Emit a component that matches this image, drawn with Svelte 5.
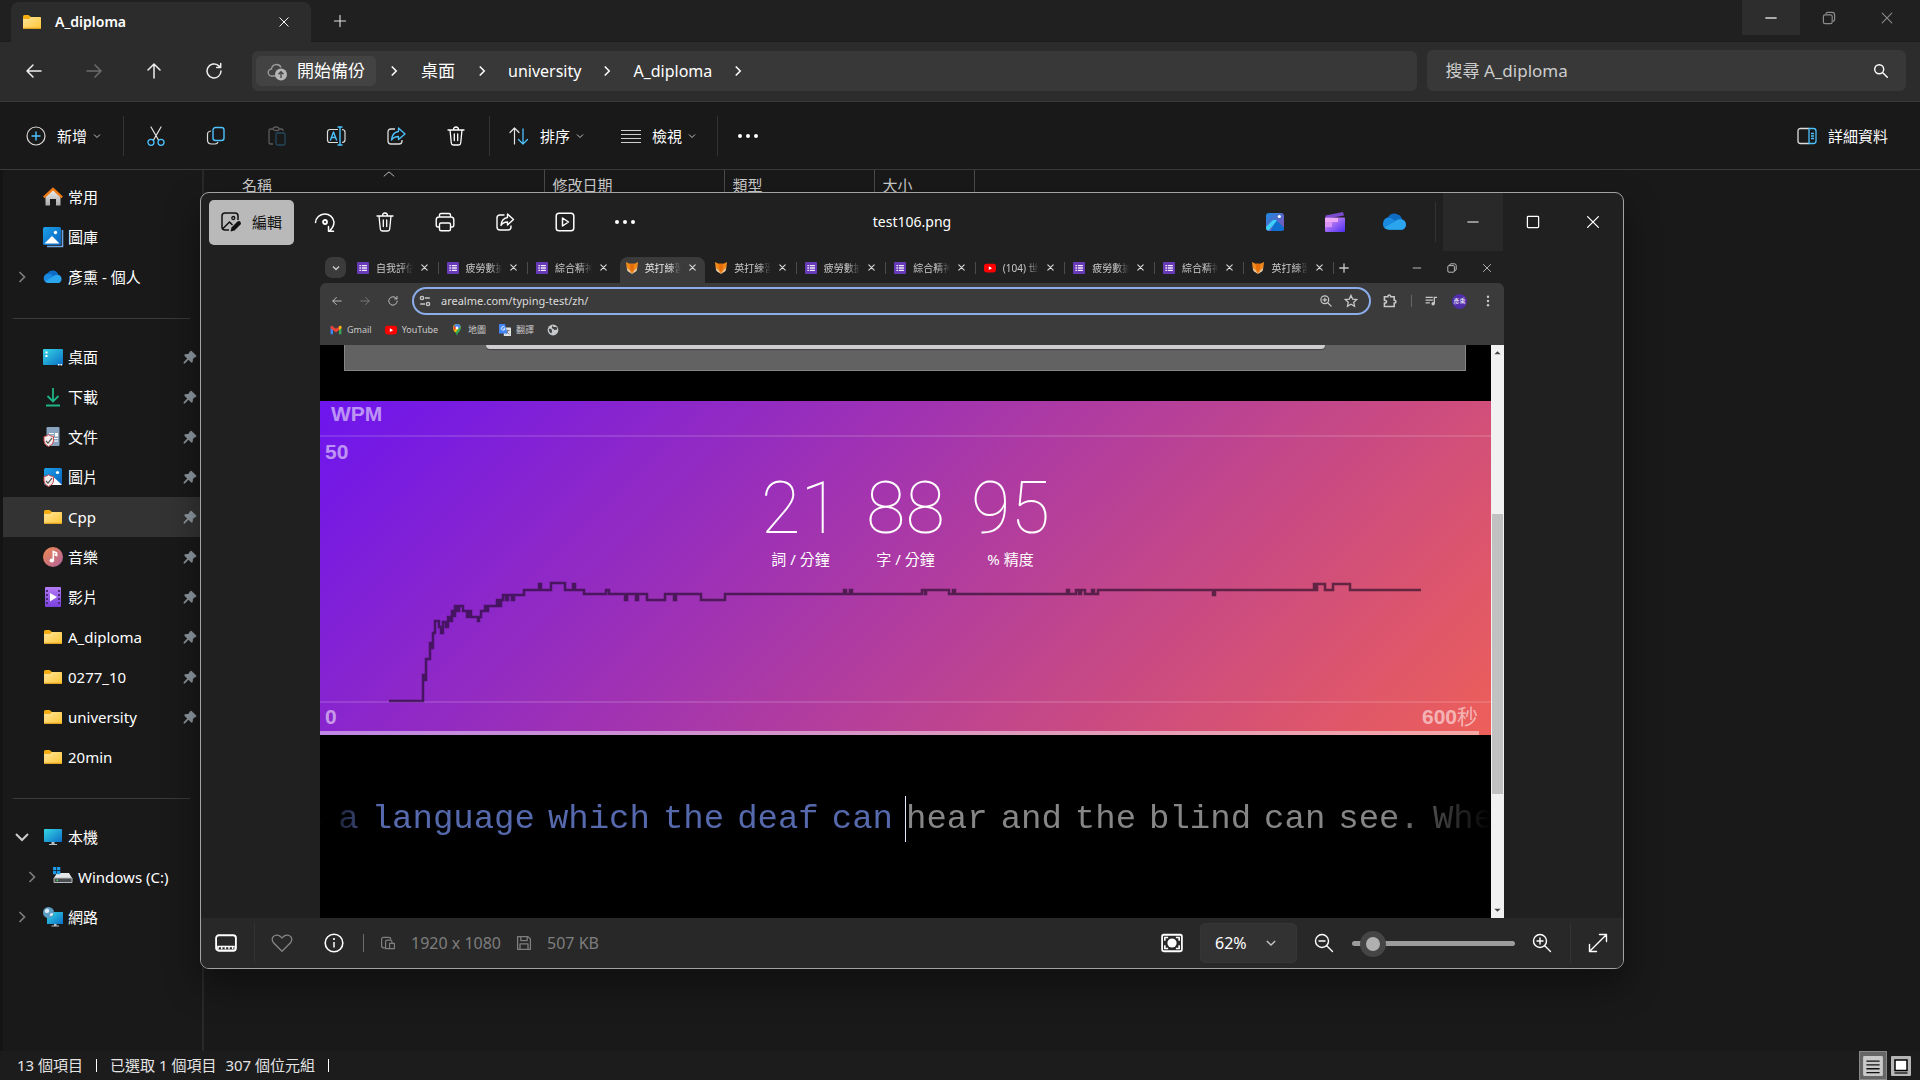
<script>
  const chevR = '<path d="M7.500 5l5 5-5 5" fill="none" stroke="currentColor" stroke-width="1.700"/>';
  const chevD = '<path d="M4 7l6 6 6-6" fill="none" stroke="currentColor" stroke-width="2"/>';
  const blue = '#4cc2ff';
  const line = (d, w = 1.3, c = 'currentColor') =>
    `<path d="${d}" fill="none" stroke="${c}" stroke-width="${w}" stroke-linecap="round" stroke-linejoin="round"/>`;
  const shield = '<path d="M1 9.500q3-.3 4.500-1.800Q7 9.200 10.500 9.500V14q0 3.500-5 5.500Q1 17.500 1 14z" fill="#f3eded" stroke="#c8474a"/><path d="M3 14l2 2.200 4-5" fill="none" stroke="#555" stroke-width="1.200"/>';

  const icons = {
    chevR,
    chevD,
    chevBold: '<path d="M4 7l6 6 6-6" fill="none" stroke="currentColor" stroke-width="3"/>',
    folder: '<path d="M1 4.500Q1 3 2.500 3h4L9 5h8.500Q19 5 19 6.500V8H1z" fill="#f5ad12"/><path d="M1 7h6l2-2h9q1 0 1 1v10.500q0 .5-.5.500h-17q-.5 0-.5-.5z" fill="url(#gFolder)"/><path d="M1 16.300h18" stroke="#d9981a" stroke-width="1"/>',
    close: line('M4 4l12 12M16 4L4 16', 1.4),
    closeBold: line('M4 4l12 12M16 4L4 16', 2.4),
    plus: line('M10 3v14M3 10h14', 1.4),
    plusBold: line('M10 3v14M3 10h14', 2.2),
    min: '<path d="M3 10h14" stroke="currentColor" stroke-width="1.500"/>',
    max: '<rect x="3" y="3" width="14" height="14" rx="1" fill="none" stroke="currentColor" stroke-width="1.600"/>',
    restore: '<rect x="3" y="6" width="11" height="11" rx="2" fill="none" stroke="currentColor" stroke-width="1.500"/><path d="M6 5q.5-2 2.500-2H14q3 0 3 3v6q0 2-2 2.300" fill="none" stroke="currentColor" stroke-width="1.500"/>',
    back: line('M17 10H3M9 4l-6 6 6 6', 1.5),
    fwd: line('M3 10h14M11 4l6 6-6 6', 1.5),
    up: line('M10 17V3M4 9l6-6 6 6', 1.5),
    reload: line('M17 10a7 7 0 1 1-2.500-5.400L16.500 6.500M16.700 2.500v4h-4', 1.5),
    cloudUp: '<path d="M9 15H5a3.500 3.500 0 0 1-.5-7A5 5 0 0 1 14 6.500" fill="none" stroke="#9c9c9c" stroke-width="1.400"/><circle cx="14" cy="13.500" r="6" fill="#b5b5b5"/><path d="M14 17v-6M11.500 13.200L14 10.700l2.500 2.500" fill="none" stroke="#444" stroke-width="1.300"/>',
    search: line('M12 12l5 5M13 8a5 5 0 1 1-10 0 5 5 0 0 1 10 0z', 1.6),
    add: '<circle cx="10" cy="10" r="9" fill="none" stroke="#d6d6d6" stroke-width="1.200"/>' + line('M10 6v8M6 10h8', 1.4, blue),
    cut: line('M5 1l7.500 13M15 1L7.500 14', 1.2, '#e4e4e4') + `<circle cx="5" cy="16.300" r="3" fill="none" stroke="${blue}" stroke-width="1.300"/><circle cx="15" cy="16.300" r="3" fill="none" stroke="${blue}" stroke-width="1.300"/>`,
    copy: `<path d="M5 5q-3.500.5-3.500 3v6q0 4 4 4h3.500q2.500 0 3-2" fill="none" stroke="#ddd" stroke-width="1.200"/><rect x="7" y="1.500" width="11" height="13" rx="2.500" fill="none" stroke="${blue}" stroke-width="1.400"/>`,
    paste: '<path d="M7 18H4.500Q3 18 3 16.500v-12Q3 3 4.500 3H7m6 0h2.500Q17 3 17 4.500V5M7 3q0-2 3-2t3 2-3 1.500S7 4 7 3z" fill="none" stroke="#5b5b5b" stroke-width="1.300"/><rect x="10" y="7" width="9" height="12" rx="1.500" fill="none" stroke="#24495c" stroke-width="1.300"/>',
    rename: '<path d="M12 3.500H4Q1.500 3.500 1.500 6v8q0 2.500 2.500 2.500h8M16 3.500q3 .2 3 2.500v8q0 2.300-3 2.500" fill="none" stroke="#ddd" stroke-width="1.200"/>' + line('M12 1h4M12 19h4M14 1v18M4.500 14l3-8 3 8M5.500 11.500h4', 1.4, blue),
    shareBlue: '<path d="M9 3H5Q2 3 2 6v9q0 3 3 3h8q3 0 3-3v-1" fill="none" stroke="#ddd" stroke-width="1.300"/>' + line('M12.500 2l6.500 6-6.500 5.500V10.500Q8 10.500 5.500 14 6 6.500 12.500 5.500z', 1.3, blue),
    share: line('M9 3H5Q2 3 2 6v9q0 3 3 3h8q3 0 3-3v-1M12.500 2l6 5.500-6 5.500V10Q8 10 6 13.500 6.500 6.500 12.500 5.500z', 1.4),
    trash: line('M2 4h16M4 4l1.300 13q.2 2 2 2h5.400q1.800 0 2-2L16 4M7.500 4q0-3 2.500-3t2.500 3M8.300 8v6.500M11.700 8v6.500', 1.3),
    sort: line('M5.500 18V2M1 6.500L5.500 2 10 6.500', 1.2, '#e4e4e4') + line('M14 3v15M9.500 13.500L14 18l4.500-4.500', 1.3, blue),
    view: '<path d="M0 4.500h20M0 8.500h20M0 12.500h20M0 16.500h20" stroke="#d0d0d0" stroke-width="1.200"/>',
    dots: '<g fill="currentColor"><circle cx="2" cy="10" r="2"/><circle cx="10" cy="10" r="2"/><circle cx="18" cy="10" r="2"/></g>',
    details: `<path d="M12 2.500H3.500Q1 2.500 1 5v10q0 2.500 2.500 2.500H12" fill="none" stroke="#ddd" stroke-width="1.300"/><path d="M12 2.500h4.500Q19 2.500 19 5v10q0 2.500-2.500 2.500H12zM14 7.500h3M14 10h3M14 12.500h3" fill="none" stroke="${blue}" stroke-width="1.300"/>`,
    home: '<path d="M2.500 9L10 2l7.500 7v9.500H13V12H7v6.500H2.500z" fill="url(#gHome)"/><path d="M.8 10.300L10 1.800l9.200 8.500" fill="none" stroke="#ef7a12" stroke-width="2.300"/>',
    gallery: '<path d="M4 19.500h15.500V3" fill="none" stroke="#6fa4e3" stroke-width="1.600"/><rect x="0" y="0" width="18" height="18" rx="1.500" fill="url(#gPic)"/><path d="M1.500 16.500L9 9l7.500 7.500z" fill="#fff"/><circle cx="12.500" cy="5.500" r="1.700" fill="#fff"/>',
    cloud: '<path d="M5.500 16A5 5 0 0 1 4.500 6.500a6 6 0 0 1 11 1.500A4.200 4.200 0 0 1 15.500 16z" fill="#0f6cc4"/><path d="M4.500 6.500q3 0 5.500 2.300L3 15.500a5 5 0 0 1 1.500-9z" fill="#1a8ae0"/><path d="M2 14.500L10.500 9q2-1.500 5-1A4.200 4.200 0 0 1 15.500 16h-10Q3.500 16 2 14.500z" fill="#2ba6ee"/>',
    desktop: '<rect x="0" y="2" width="20" height="16" rx="1" fill="url(#gDesk)"/><path d="M2.500 4.500h2v2h-2zM2.500 8h2v2h-2zM15 17h1.500v1.500H15zM17.500 17H19v1.500h-1.500z" fill="#fff"/>',
    download: '<path d="M10 1v13M4.500 9l5.500 5.500L15.500 9M3 18.500h14" fill="none" stroke="#1fb487" stroke-width="1.800"/>',
    doc: '<rect x="3.500" y="0" width="13" height="19" rx="1" fill="#8aa4c0"/><path d="M6 6.500h5M6 9h5M6 11.500h9M6 14h9" stroke="#fff"/><path d="M12 6h3v3.500h-3z" fill="#fff"/>' + shield,
    pictures: '<rect x="1" y="1" width="18" height="17" rx="1.500" fill="url(#gPic)"/><path d="M4 18l7-7.500 8 7.500z" fill="#fff"/><circle cx="14.500" cy="5.500" r="1.600" fill="#fff"/>' + shield,
    music: '<circle cx="10" cy="10" r="10" fill="url(#gMusic)"/><ellipse cx="8.800" cy="13.500" rx="2.300" ry="2" fill="#fff"/><path d="M10.300 13.500V4.500l3.300 1.500v2.500l-2-1" fill="none" stroke="#fff" stroke-width="1.600"/>',
    video: '<rect x="2" y="0" width="16" height="20" rx="1" fill="url(#gVideo)"/><path d="M4 3v15M16 3v15" stroke="#4a2a7a" stroke-width="2" stroke-dasharray="2 2"/><path d="M7 6l7 4-7 4.500z" fill="#fff"/>',
    pc: '<rect x="1" y="2" width="18" height="13" rx=".8" fill="url(#gDesk)"/><path d="M8.500 15h3v2H14v1H6v-1h2.500z" fill="#b9c3ca"/>',
    drive: '<path d="M4 6h12l3 5H1z" fill="#e5e7e9"/><path d="M1 11h18v4.500H1z" fill="#4a4d50" stroke="#b6b9bb" stroke-width="1"/><path d="M3.500 12.500h1.500v1.500H3.500z" fill="#3bdc5c"/><path d="M0 0h3.300v3.300H0zM4 0h3.300v3.300H4zM0 4h3.300v3.300H0zM4 4h3.300v3.300H4z" fill="#1c9bea"/>',
    network: '<rect x="4" y="5" width="16" height="12" fill="url(#gDesk)"/><path d="M11 17h2.500v1.500H16v1H8.500v-1H11z" fill="#b9c3ca"/><circle cx="5.500" cy="5.500" r="5.500" fill="#5d9dc4"/><path d="M2 3q3-3 4 0t-2 3-2-3zM7 7q3-2 3 0t-3 2z" fill="#dcecf5"/>',
    pin: '<path d="M12 2.500L17.800 8q1 1.300-.5 1.800l-3.500 2.400-.5 4q-.8 1.500-2 .5L8 13.500 3.500 18H2v-1.500L6.500 12 3.300 8.700q-1-1.200.5-2l4-.5 2.400-3.500q.7-1.200 1.800-.2z" fill="#8d969f"/>',
    edit: '<path d="M17 8V4q0-3-3-3H4Q1 1 1 4v11q0 3 3 3h4M2 16.500L8.500 10l3 3" fill="none" stroke="#111" stroke-width="1.500"/><circle cx="12.300" cy="6" r="1.500" fill="none" stroke="#111" stroke-width="1.300"/><path d="M9.500 19.500l1-4L16.500 9.500q2-1 3 .5t0 2.500L13.500 18.500z" fill="#111"/>',
    rotate: line('M.5 10.500A9.300 9.300 0 0 1 19 10q0 5-4.500 9M13.500 14.500v4.800h5', 1.5) + '<circle cx="10" cy="10" r="2" fill="none" stroke="currentColor" stroke-width="1.800"/>',
    print: line('M4.500 5V3q0-1.500 1.500-1.500h8q1.500 0 1.500 1.500v2M4.500 15H3q-1.800 0-1.800-2V8Q1.200 5 4 5h12q2.800 0 2.800 3v5q0 2-1.800 2h-1.500M6 11h8q1.500 0 1.500 1.500v4.500q0 1.800-1.500 1.800H6q-1.500 0-1.500-1.800v-4.500Q4.500 11 6 11z', 1.4),
    play: line('M4 1.200h12q2.800 0 2.800 2.800v12q0 2.800-2.800 2.800H4q-2.800 0-2.800-2.800V4Q1.200 1.200 4 1.200zM7.500 6v8l6-4z', 1.5),
    photos: '<rect x="1" y="1" width="18" height="18" rx="3" fill="url(#gPhotos)"/><path d="M10.500 7.500l8.500 8v1q0 2.500-2.500 2.500H6z" fill="#0f6fd0"/><path d="M1 15l6.500-6.500q2-1.500 4.500 0L3.500 18.800Q1 18 1 16z" fill="#3fd0fa"/><circle cx="14.300" cy="4.500" r="1.600" fill="#fff"/>',
    clip: '<path d="M.5 3.500L18 0l1 3.500L.5 7z" fill="#7b4bd0"/><rect x="0" y="5.500" width="20" height="14.500" rx="1" fill="url(#gClip)"/><path d="M0 6h13v4H0z" fill="#eba7f8"/><path d="M0 10h7v5H0z" fill="#d993f5"/>',
    film: '<rect x="1" y="3" width="18" height="14" rx="2.500" fill="none" stroke="currentColor" stroke-width="1.700"/><path d="M2 12.500h16V16H2z" fill="currentColor"/><path d="M3.500 14.700h14" stroke="#282828" stroke-width="1.800" stroke-dasharray="2 1.300"/>',
    heart: line('M10 17.500L2.500 10Q0 7 2 4.200 5 1.500 8.500 4L10 5.500 11.500 4Q15 1.500 18 4.200 20 7 17.500 10z', 1.2),
    info: '<circle cx="10" cy="10" r="8.800" fill="none" stroke="currentColor" stroke-width="1.600"/><path d="M10 9v5.500" stroke="currentColor" stroke-width="1.500"/><circle cx="10" cy="6" r="1.100" fill="currentColor"/>',
    dims: line('M7 16H4.500Q2 16 2 13.500v-8Q2 3 4.500 3H11q2.500 0 2.500 2M7 17V8.500Q7 6.500 9 6.500h4q2 0 2 2.500M12 10.500h6V17h-6zM7 17h5', 1.5),
    save: line('M2 2h13l3 3v13H2zM6 2v5h8V2M5 18v-7h10v7', 1.6),
    fit: '<rect x="1" y="2.500" width="18" height="15" rx="1.500" fill="none" stroke="currentColor" stroke-width="1.600"/><circle cx="10" cy="10" r="4.200" fill="currentColor"/><path d="M3.500 8V5h3M13.500 5h3v3M16.500 12v3h-3M6.500 15h-3v-3" fill="none" stroke="currentColor" stroke-width="1.500"/>',
    zoomOut: line('M12.500 12.500l6 6M14.500 8a6.500 6.500 0 1 1-13 0 6.500 6.500 0 0 1 13 0zM5 8h6', 1.4),
    zoomIn: line('M12.500 12.500l6 6M14.500 8a6.500 6.500 0 1 1-13 0 6.500 6.500 0 0 1 13 0zM5 8h6M8 5v6', 1.4),
    zoomBold: line('M12.500 12.500l6 6M14.500 8a6.500 6.500 0 1 1-13 0 6.500 6.500 0 0 1 13 0zM5 8h6M8 5v6', 2),
    expand: line('M2 18L18 2M11.500 1.500h7v7M1.500 11.500v7h7', 1.4),
    form: '<rect x="0" y="0" width="20" height="20" rx="1.500" fill="#673ab7"/><path d="M4 6h2.500M4 10h2.500M4 14h2.500M8 6h8.500M8 10h8.500M8 14h8.500" stroke="#f3ecfa" stroke-width="2.300"/>',
    fox: '<path d="M0 0l6 3h8l6-3-1 9-9 10.500L1 9z" fill="#f08a1d"/><path d="M1 9l4.500 4.500L10 19.500l4.500-6L19 9l-1.500 6L10 20l-7.500-5z" fill="#f6d2a8"/><path d="M6 3h8l-1 9-3 5-3-5z" fill="#e66f0b"/>',
    yt: '<rect x="0" y="3" width="20" height="14.500" rx="4" fill="#f00"/><path d="M8 7l5.500 3.300L8 13.500z" fill="#fff"/>',
    tune: '<path d="M10 5h8M2 15h8" stroke="currentColor" stroke-width="2.400"/><circle cx="5" cy="5" r="2.700" fill="none" stroke="currentColor" stroke-width="2.400"/><circle cx="15" cy="15" r="2.700" fill="none" stroke="currentColor" stroke-width="2.400"/>',
    star: '<path d="M10 2l2.400 5.300 5.800.6-4.300 3.900 1.200 5.700L10 14.600l-5.100 2.900 1.200-5.700L1.800 7.900l5.800-.6z" fill="none" stroke="currentColor" stroke-width="1.800"/>',
    puzzle: '<path d="M2 4h5q0-2.500 2-2.500T11 4h5v5q2.500 0 2.500 2T16 13v5H2v-5q3 0 3-2T2 9z" fill="none" stroke="currentColor" stroke-width="2.200"/>',
    playlist: '<path d="M1 4h12M1 8.500h12M1 13h7M15.500 14V4H20" fill="none" stroke="currentColor" stroke-width="2.200"/><circle cx="13.500" cy="14.500" r="2.800" fill="currentColor"/>',
    vdots: '<g fill="currentColor"><circle cx="10" cy="3" r="2"/><circle cx="10" cy="10" r="2"/><circle cx="10" cy="17" r="2"/></g>',
    gmail: '<path d="M1 17V4l4 3v10z" fill="#4285f4"/><path d="M19 17V4l-4 3v10z" fill="#34a853"/><path d="M1 4q2-2 4 0l5 4 5-4q2-2 4 0v3l-9 7-9-7z" fill="#ea4335"/><path d="M15 4q2-2 4 0v3l-4 3z" fill="#fbbc04"/>',
    maps: '<path d="M10 0a6.500 6.500 0 0 1 6.500 6.500C16.500 12 11 13 10 20 9 13 3.500 12 3.500 6.500A6.500 6.500 0 0 1 10 0z" fill="#34a853"/><path d="M10 0a6.500 6.500 0 0 1 6 4L7 14Q3.500 11 3.500 6.500A6.500 6.500 0 0 1 10 0z" fill="#fbbc04"/><path d="M10 0a6.500 6.500 0 0 1 6 4l-5 5-6-6Q7 0 10 0z" fill="#4285f4"/><path d="M5 2.500l4 4-4 4.500Q3 6 5 2.500z" fill="#ea4335"/><circle cx="10" cy="6.500" r="2.200" fill="#fff"/>',
    translate: '<rect x="8" y="6" width="12" height="14" rx="1" fill="#dfe1e4"/><path d="M11 11h7M14.500 9.500V11q0 4-3 6M12.500 12q2 4 5 5" stroke="#666" fill="none" stroke-width="1.200"/><path d="M0 1q0-1 1-1h9l4 16H1q-1 0-1-1z" fill="#4285f4"/><path d="M9.500 5.500A3 3 0 1 0 10 8H7.500" fill="none" stroke="#fff" stroke-width="1.500"/>',
    globe: '<circle cx="10" cy="10" r="9" fill="#c7c9cc"/><path d="M3 8q4-1 5 2t-1 6q-4-2-4-8zM9 2q1 4 5 3t3 4l-5 1q-1-3-4-3z" fill="#3f4042"/>',
    up2: '<path d="M3 14l7-7 7 7z" fill="#444"/>',
    down2: '<path d="M3 6l7 7 7-7z" fill="#444"/>',
    caretUp: line('M3 13l7-6 7 6', 1.3),
    listView: '<rect x="1" y="1" width="18" height="18" rx="1" fill="#c9c9c9"/><path d="M4 5.500h12M4 9h12M4 12.500h12M4 16h12" stroke="#111" stroke-width="1.200"/>',
    thumbView: '<rect x="0" y="0" width="20" height="20" rx="1" fill="#b5b5b5"/><rect x="4" y="4" width="12" height="10.500" fill="#fff" stroke="#000" stroke-width="1.500"/><path d="M3.500 17h13" stroke="#000" stroke-width="1.200"/>'
  };

  const places = [
    { icon: 'home', label: '常用' },
    { icon: 'gallery', label: '圖庫' },
    { icon: 'cloud', label: '彥熏 - 個人', chev: 'chevR' },
    { divider: true },
    { icon: 'desktop', label: '桌面', pin: true },
    { icon: 'download', label: '下載', pin: true },
    { icon: 'doc', label: '文件', pin: true },
    { icon: 'pictures', label: '圖片', pin: true },
    { icon: 'folder', label: 'Cpp', pin: true, active: true },
    { icon: 'music', label: '音樂', pin: true },
    { icon: 'video', label: '影片', pin: true },
    { icon: 'folder', label: 'A_diploma', pin: true },
    { icon: 'folder', label: '0277_10', pin: true },
    { icon: 'folder', label: 'university', pin: true },
    { icon: 'folder', label: '20min' },
    { divider: true },
    { icon: 'pc', label: '本機', chev: 'chevD' },
    { icon: 'drive', label: 'Windows (C:)', chev: 'chevR', nested: true },
    { icon: 'network', label: '網路', chev: 'chevR' }
  ];

  const commands = [
    ['cut', '剪下'], ['copy', '複製'], ['paste', '貼上'],
    ['rename', '重新命名'], ['shareBlue', '分享'], ['trash', '刪除']
  ];
  const viewerTools = [
    ['rotate', '旋轉'], ['trash', '刪除'], ['print', '列印'],
    ['share', '分享'], ['play', '投影片'], ['dots', '更多']
  ];
  const webTabs = [
    ['form', '自我評估'], ['form', '疲勞數據'], ['form', '綜合精神'], ['fox', '英打練習', true],
    ['fox', '英打練習'], ['form', '疲勞數據'], ['form', '綜合精神'], ['yt', '(104) 世'],
    ['form', '疲勞數據'], ['form', '綜合精神'], ['fox', '英打練習']
  ];
  const bookmarks = [['gmail', 'Gmail'], ['yt', 'YouTube'], ['maps', '地圖'], ['translate', '翻譯'], ['globe', '']];
  const stats = [['21', '詞 / 分鐘'], ['88', '字 / 分鐘'], ['95', '% 精度']];
  const typed = ['is', 'a', 'language', 'which', 'the', 'deaf', 'can'];
  const upcoming = ['hear', 'and', 'the', 'blind', 'can', 'see.', 'When'];

  const speedLine =
    'M389 701H423V675H425V680H426V659H430V643H432V648H433V633H435V621H439V627H441V633H443V622H446V627H448V617H450V621H452V611H454V616H455V606H457V611H459V606H463V611H467V617H469V611H471V617H478V621H479V617H481V611H485V606H487V611H488V606H497V600H499V606H501V600H503V595H506V600H508V595H512V600H514V595H524V590H539V584H541V590H551V583H565V590H573V584H575V590H584V594H606V590H609V594H625V600H627V594H636V600H638V594H647V600H665V594H674V600H676V594H701V600H725V594H844V590H846V594H850V590H852V594H922V590H925V594H926V590H949V594H953V590H955V594H1067V590H1069V594H1076V590H1079V594H1081V590H1085V594H1092V590H1094V594H1098V590H1213V595H1215V590H1314V584H1316V590H1317V584H1325V590H1333V584H1350V590H1421';

  let query = $state('');
  let scale = $state('62%');
  let zoom = $state(6);
</script>

{#snippet ic(name, cls)}
  <svg class="ic {cls}" viewBox="0 0 20 20" aria-hidden="true">{@html icons[name]}</svg>
{/snippet}

<svg class="defs" width="0" height="0" aria-hidden="true">
  <defs>
    <linearGradient id="gFolder" x1="0" y1="0" x2="1" y2="1"><stop offset="0" stop-color="#ffe59a" /><stop offset="1" stop-color="#ffc634" /></linearGradient>
    <linearGradient id="gHome" x1="0" y1="0" x2="0" y2="1"><stop offset="0" stop-color="#f2f2f2" /><stop offset="1" stop-color="#a9a9a9" /></linearGradient>
    <linearGradient id="gPic" x1="0" y1="0" x2="1" y2="1"><stop offset="0" stop-color="#1ba1ea" /><stop offset="1" stop-color="#0b62bd" /></linearGradient>
    <linearGradient id="gDesk" x1="0" y1="0" x2="1" y2="1"><stop offset="0" stop-color="#36d6e4" /><stop offset="1" stop-color="#0b6fc6" /></linearGradient>
    <linearGradient id="gMusic" x1="0" y1="0" x2="1" y2="1"><stop offset="0" stop-color="#f08a4e" /><stop offset="1" stop-color="#b0619f" /></linearGradient>
    <linearGradient id="gVideo" x1="0" y1="0" x2="0" y2="1"><stop offset="0" stop-color="#b47cf5" /><stop offset="1" stop-color="#7a3fdc" /></linearGradient>
    <linearGradient id="gPhotos" x1="0" y1="0" x2="1" y2="1"><stop offset="0" stop-color="#1b8ae0" /><stop offset="1" stop-color="#8a4db8" /></linearGradient>
    <linearGradient id="gClip" x1="0" y1="0" x2="1" y2="1"><stop offset="0" stop-color="#e99bf8" /><stop offset="1" stop-color="#4a2ef0" /></linearGradient>
  </defs>
</svg>

<div class="explorer">
  <header class="titlebar">
    <div class="tab">
      {@render ic('folder', 's20')}
      <span class="tab-name">A_diploma</span>
      <button class="tab-close" aria-label="關閉索引標籤">{@render ic('close', 's14')}</button>
    </div>
    <button class="new-tab" aria-label="新增索引標籤">{@render ic('plus', 's16')}</button>
    <div class="win-controls">
      <button class="hot" aria-label="最小化">{@render ic('min', 's16')}</button>
      <button aria-label="還原">{@render ic('restore', 's16')}</button>
      <button aria-label="關閉">{@render ic('close', 's16')}</button>
    </div>
  </header>

  <div class="navbar">
    <button class="nav-btn" aria-label="上一頁">{@render ic('back', 's20')}</button>
    <button class="nav-btn dim" aria-label="下一頁">{@render ic('fwd', 's20')}</button>
    <button class="nav-btn" aria-label="上移">{@render ic('up', 's20')}</button>
    <button class="nav-btn" aria-label="重新整理">{@render ic('reload', 's20')}</button>
    <nav class="address" aria-label="路徑">
      <button class="backup">{@render ic('cloudUp', 's20')}開始備份</button>
      {@render ic('chevR', 'crumb-chev')}
      <button class="crumb">桌面</button>
      {@render ic('chevR', 'crumb-chev')}
      <button class="crumb latin">university</button>
      {@render ic('chevR', 'crumb-chev')}
      <button class="crumb latin">A_diploma</button>
      {@render ic('chevR', 'crumb-chev')}
    </nav>
    <label class="search">
      <input type="text" bind:value={query} placeholder="搜尋 A_diploma" aria-label="搜尋 A_diploma" />
      {@render ic('search', 's18')}
    </label>
  </div>

  <div class="toolbar">
    <button class="cmd new">{@render ic('add', 's20')}新增{@render ic('chevD', 'drop')}</button>
    <span class="vsep"></span>
    <div class="cmd-group">
      {#each commands as [name, label]}
        <button class="sq" aria-label={label}>{@render ic(name, 's20')}</button>
      {/each}
    </div>
    <span class="vsep"></span>
    <button class="cmd sort">{@render ic('sort', 's20')}排序{@render ic('chevD', 'drop')}</button>
    <button class="cmd view">{@render ic('view', 's20')}檢視{@render ic('chevD', 'drop')}</button>
    <span class="vsep"></span>
    <button class="sq" aria-label="查看更多">{@render ic('dots', 's20')}</button>
    <button class="cmd details">{@render ic('details', 's20')}詳細資料</button>
  </div>

  <div class="body">
    <aside class="sidebar">
      {#each places as p}
        {#if p.divider}
          <hr />
        {:else}
          <a href="#place" class="place" class:active={p.active} class:nested={p.nested}>
            <span class="tree" class:open={p.chev === 'chevD'}>{#if p.chev}{@render ic(p.chev, 's20')}{/if}</span>
            {@render ic(p.icon, 's20')}
            <span class="place-name">{p.label}</span>
            {#if p.pin}{@render ic('pin', 's16')}{/if}
          </a>
        {/if}
      {/each}
    </aside>
    <main class="files">
      <table>
        <thead>
          <tr>
            <th class="c-name"><span class="name-cell">名稱{@render ic('caretUp', 'sort-mark')}</span></th>
            <th class="c-date">修改日期</th>
            <th class="c-type">類型</th>
            <th class="c-size">大小</th>
            <th></th>
          </tr>
        </thead>
      </table>
    </main>
  </div>

  <footer class="status">
    <span>13 個項目</span><i></i><span>已選取 1 個項目</span><span class="bytes">307 個位元組</span><i></i>
    <div class="view-modes">
      <button class="on" aria-label="詳細資料檢視">{@render ic('listView', 's22')}</button>
      <button aria-label="縮圖檢視">{@render ic('thumbView', 's20')}</button>
    </div>
  </footer>

  <section class="viewer" aria-label="test106.png">
    <header class="v-head">
      <div class="v-left">
        <button class="edit">{@render ic('edit', 's20')}編輯</button>
        {#each viewerTools as [name, label]}
          <button class="sq" aria-label={label}>{@render ic(name, 's20')}</button>
        {/each}
      </div>
      <h1>test106.png</h1>
      <div class="v-right">
        <button class="sq" aria-label="相片">{@render ic('photos', 's20')}</button>
        <button class="sq" aria-label="Clipchamp">{@render ic('clip', 's20')}</button>
        <button class="sq" aria-label="OneDrive">{@render ic('cloud', 's26')}</button>
        <span class="vsep"></span>
        <button class="sq hot" aria-label="最小化">{@render ic('min', 's16')}</button>
        <button class="sq" aria-label="最大化">{@render ic('max', 's16')}</button>
        <button class="sq" aria-label="關閉">{@render ic('close', 's18')}</button>
      </div>
    </header>

    <div class="photo">
      <div class="web-tabs">
        <button class="tab-search" aria-label="搜尋分頁">{@render ic('chevBold', 's10')}</button>
        <div class="tab-row">
          {#each webTabs as [icon, label, active], i}
            <div class="web-tab" class:active class:sep={!active && i !== 2}>
              {@render ic(icon, 's12')}
              <span>{label}</span>
              <button aria-label="關閉分頁">{@render ic('closeBold', 's9')}</button>
            </div>
          {/each}
        </div>
        <button class="web-plus" aria-label="新分頁">{@render ic('plusBold', 's12')}</button>
        <div class="web-win">
          <button aria-label="最小化">{@render ic('min', 's12')}</button>
          <button aria-label="還原">{@render ic('restore', 's12')}</button>
          <button aria-label="關閉">{@render ic('close', 's12')}</button>
        </div>
      </div>
      <div class="web-bars">
        <div class="web-nav">
          <div class="web-arrows">
            <button aria-label="上一頁">{@render ic('back', 's12')}</button>
            <button class="dim" aria-label="下一頁">{@render ic('fwd', 's12')}</button>
            <button aria-label="重新載入">{@render ic('reload', 's12')}</button>
          </div>
          <div class="url">
            {@render ic('tune', 's12')}
            <input type="text" value="arealme.com/typing-test/zh/" aria-label="網址" />
            {@render ic('zoomBold', 's12')}
            {@render ic('star', 's14')}
          </div>
          <div class="web-actions">
            {@render ic('puzzle', 's14')}
            <span class="bar"></span>
            {@render ic('playlist', 's12')}
            <span class="avatar">彥熏</span>
            {@render ic('vdots', 's12')}
          </div>
        </div>
        <div class="bookmarks">
          {#each bookmarks as [icon, label]}
            <a href="#bookmark" aria-label={label || '網站'}>{@render ic(icon, 's12')}{label}</a>
          {/each}
        </div>
      </div>
      <div class="page">
        <div class="page-main">
          <div class="panel-end"><div class="panel-bar"></div></div>
          <div class="chart">
            <div class="axes">
              <div class="ax-top">WPM</div>
              <div class="ax-mid">50</div>
              <div class="ax-bottom"><span>0</span><span>600<span class="unit">秒</span></span></div>
              <div class="progress"></div>
            </div>
            <svg class="speed" viewBox="320 401 1171 334" preserveAspectRatio="none" aria-hidden="true">
              <path d={speedLine} fill="none" stroke="#1c0a22" stroke-opacity=".62" stroke-width="2.500" />
            </svg>
            <div class="stats">
              {#each stats as [value, unit]}
                <div class="stat"><b>{value}</b><span>{unit}</span></div>
              {/each}
            </div>
          </div>
          <div class="typing">
            <div class="typed">{#each typed as word}<span>{word}</span>{/each}</div>
            <div class="caret"></div>
            <div class="upcoming">{#each upcoming as word}<span>{word}</span>{/each}</div>
          </div>
        </div>
        <div class="scroll">
          {@render ic('up2', 's9')}
          <div class="track"><div class="thumb"></div></div>
          {@render ic('down2', 's9')}
        </div>
      </div>
    </div>

    <footer class="v-foot">
      <button class="fb film" aria-label="膠捲">{@render ic('film', 's22')}</button>
      <span class="vsep"></span>
      <button class="fb heart" aria-label="最愛">{@render ic('heart', 's22')}</button>
      <button class="fb info" aria-label="資訊">{@render ic('info', 's20')}</button>
      <span class="vsep short"></span>
      <div class="meta">{@render ic('dims', 's16')}<span>1920 x 1080</span>{@render ic('save', 's16')}<span>507 KB</span></div>
      <div class="zoom">
        <button class="fb" aria-label="符合視窗">{@render ic('fit', 's22')}</button>
        <label class="percent">
          <select bind:value={scale} aria-label="縮放比例"><option>62%</option><option>100%</option></select>
          {@render ic('chevD', 'drop')}
        </label>
        <button class="fb" aria-label="縮小">{@render ic('zoomOut', 's20')}</button>
        <input class="slider" type="range" min="0" max="100" bind:value={zoom} aria-label="縮放" />
        <button class="fb" aria-label="放大">{@render ic('zoomIn', 's20')}</button>
        <span class="vsep"></span>
        <button class="fb" aria-label="全螢幕">{@render ic('expand', 's20')}</button>
      </div>
    </footer>
  </section>
</div>

<style>
  :global(body) { background: #191919; }
  * { box-sizing: border-box; }
  .defs { position: absolute; }
  button, input, select {
    font: inherit; color: inherit; background: none; border: 0; padding: 0; margin: 0; outline: none;
  }
  a { color: inherit; text-decoration: none; }
  .ic { display: block; flex: none; overflow: visible; }
  .s9 { width: 9px; height: 9px; }
  .s10 { width: 10px; height: 10px; }
  .s12 { width: 12px; height: 12px; }
  .s14 { width: 14px; height: 14px; }
  .s16 { width: 16px; height: 16px; }
  .s18 { width: 18px; height: 18px; }
  .s20 { width: 20px; height: 20px; }
  .s22 { width: 22px; height: 22px; }
  .s26 { width: 26px; height: 26px; }
  .drop { width: 10px; height: 10px; color: #c4c4c4; }

  .explorer {
    position: relative;
    display: flex;
    flex-direction: column;
    min-height: 100vh;
    overflow: hidden;
    background: #191919;
    color: #fff;
    font: 15px/20px "Noto Sans", "Noto Sans CJK TC", sans-serif;
  }

  .titlebar { display: flex; height: 42px; background: #202020; border-bottom: 1px solid #1c1c1c; }
  .tab {
    display: flex; align-items: center; width: 300px; margin: 2px 0 -1px 11px; padding: 0 20px 0 11px;
    background: #2c2c2c; border-radius: 8px 8px 0 0;
  }
  .tab-name { flex: 1; margin-left: 13px; font-size: 14px; font-weight: 600; }
  .new-tab { width: 58px; display: grid; place-items: center; color: #ddd; }
  .win-controls { display: flex; margin-left: auto; padding-right: 4px; height: 35px; color: #8a8a8a; }
  .win-controls button { width: 58px; display: grid; place-items: center; }
  .win-controls .hot { background: #2d2d2d; color: #fff; }

  .navbar {
    display: flex; align-items: center; height: 60px; padding: 0 14px 2px 4px;
    background: #2c2c2c; border-bottom: 1px solid #3a3a3a; font-size: 17px;
  }
  .nav-btn { width: 60px; height: 40px; display: grid; place-items: center; color: #eee; }
  .nav-btn.dim { color: #6c6c6c; }
  .address {
    flex: 1; display: flex; align-items: center; height: 40px; margin: 0 10px 0 8px; padding-left: 4px;
    background: #383838; border-radius: 6px;
  }
  .backup {
    display: flex; align-items: center; gap: 10px; height: 30px; padding: 0 11px; background: #434343; border-radius: 5px;
  }
  .crumb { padding: 0 9px; }
  .crumb.latin { padding: 0 8px; font-size: 16px; }
  .crumb-chev { width: 18px; height: 18px; margin: 0 9px; }
  .search {
    flex: 0 0 calc(25% + 4px); display: flex; align-items: center; height: 41px; padding: 0 16px 0 19px; background: #383838; border-radius: 6px;
  }
  .search input { flex: 1; min-width: 0; }
  .search input::placeholder { color: #cdcdcd; opacity: 1; }

  .toolbar { display: flex; align-items: center; height: 68px; border-bottom: 1px solid #3a3a3a; }
  .vsep { flex: none; width: 1px; height: 40px; background: #333; }
  .cmd { display: flex; align-items: center; height: 40px; gap: 11px; }
  .cmd .drop { margin-left: -6px; }
  .cmd.new { width: 123px; padding-left: 26px; }
  .cmd.sort { padding-left: 19px; }
  .cmd.view { padding: 0 20px 0 36px; }
  .cmd.details { margin-left: auto; padding-right: 32px; }
  .cmd-group { display: flex; margin: 0 3px 0 2px; }
  .sq { width: 60px; height: 40px; display: grid; place-items: center; }

  .body { flex: 1; display: flex; }
  .sidebar { width: 204px; padding-top: 7px; border-left: 3px solid #141414; border-right: 2px solid #292929; }
  .sidebar hr { height: 1px; margin: 21px 12px 18px 10px; border: 0; background: #3a3a3a; }
  .place { display: flex; align-items: center; height: 40px; padding: 0 4px 0 9px; }
  .place.active { background: #333; }
  .place.nested { padding-left: 19px; }
  .tree { width: 20px; margin-right: 11px; color: #7d7d7d; }
  .tree.open { color: #ccc; }
  .place-name { flex: 1; margin-left: 5px; white-space: nowrap; }

  .files { flex: 1; }
  table { width: 100%; table-layout: fixed; border-collapse: collapse; }
  th { height: 30px; padding: 0 8px 0; border-right: 1px solid #4a4a4a; text-align: left; font-weight: 400; color: #ccc; }
  th:last-child { border-right: 0; }
  .c-name { width: 340px; padding-left: 38px; }
  .c-date { width: 180px; }
  .c-type { width: 150px; }
  .c-size { width: 100px; }
  .name-cell { display: flex; gap: 110px; }
  .sort-mark { width: 14px; height: 14px; margin-top: -8px; }

  .status { display: flex; align-items: center; height: 29px; padding-left: 17px; gap: 13px; background: #1c1c1c; color: #e4e4e4; }
  .status > span { padding-bottom: 2px; }
  .status i { width: 1px; height: 13px; background: #fff; }
  .status .bytes { margin-left: -4px; }
  .view-modes { display: flex; align-items: center; gap: 4px; margin: 0 9px 0 auto; height: 100%; }
  .view-modes .on { display: grid; place-items: center; width: 28px; height: 29px; background: #666; border: 1px solid #888; }

  .viewer {
    position: absolute; top: 192px; right: 296px; bottom: 111px; left: 200px;
    display: flex; flex-direction: column; overflow: hidden;
    background: #202020; border: 1px solid #a3a3a3; border-radius: 9px;
    box-shadow: 0 16px 36px rgba(0, 0, 0, .4);
  }
  .v-head { display: grid; grid-template-columns: 1fr auto 1fr; align-items: center; height: 59px; padding-bottom: 1px; }
  .v-left, .v-right { display: flex; align-items: center; }
  .v-left { padding-left: 8px; }
  .v-right { justify-content: flex-end; height: 100%; }
  .v-right .vsep { margin: 0 7px 0 10px; }
  .v-right .hot { height: 58px; background: #292929; }
  .edit {
    display: flex; align-items: center; gap: 11px; width: 85px; height: 45px; margin-right: 1px; padding-left: 12px;
    color: #111; background: #b9b9b9; border-radius: 5px;
  }
  h1 { margin: 0; font-size: 14px; font-weight: 400; }

  .photo { flex: 1; display: flex; flex-direction: column; min-height: 0; margin: 0 119px; color: #c8c8c8; font-size: 10px; }
  .web-tabs { display: flex; align-items: flex-end; height: 31px; padding-left: 5px; }
  .tab-search { flex: none; width: 21px; height: 21px; margin: 0 3px 5px 0; display: grid; place-items: center; background: #3b3b3b; border-radius: 7px; }
  .tab-row { flex: 0 1 985px; min-width: 0; display: grid; grid-template-columns: repeat(11, minmax(0, 1fr)); }
  .web-tab { min-width: 0; display: flex; align-items: center; height: 26px; padding: 0 7px 5px 8px; }
  .web-tab.sep { padding-right: 0; }
  .web-tab.sep::after { content: ""; width: 1px; height: 12px; margin-left: 6px; background: #4c4c4c; }
  .web-tab.active { background: #3b3b3b; border-radius: 8px 8px 0 0; color: #e6e6e6; margin: 0 2px; padding: 0 5px 5px 6px; }
  .web-tab span {
    flex: 1; min-width: 0; margin: 0 4px 0 7px; overflow: hidden; white-space: nowrap; line-height: 14px;
    -webkit-mask-image: linear-gradient(90deg, #000 65%, transparent);
    mask-image: linear-gradient(90deg, #000 65%, transparent);
  }
  .web-tab button { width: 15px; display: grid; place-items: center; color: #ddd; }
  .web-plus { width: 20px; height: 26px; padding-bottom: 5px; display: grid; place-items: center; }
  .web-win { display: flex; margin-left: auto; }
  .web-win button { width: 35px; height: 26px; padding-bottom: 5px; display: grid; place-items: center; }

  .web-bars { height: 62px; background: #3b3b3b; border-radius: 6px 6px 0 0; }
  .web-nav { display: flex; align-items: center; height: 36px; }
  .web-arrows { display: flex; width: 92px; padding-left: 3px; }
  .web-arrows button { width: 28px; display: grid; place-items: center; }
  .dim { color: #7e7e7e; }
  .url {
    flex: 1; display: flex; align-items: center; height: 28px; padding: 0 11px 0 5px;
    border: 2px solid #8badea; border-radius: 14px;
  }
  .url input { flex: 1; min-width: 0; margin-left: 10px; font-size: 11px; line-height: 16px; color: #ddd; }
  .url .s14 { margin-left: 12px; }
  .web-actions { display: flex; align-items: center; width: 133px; padding-left: 12px; }
  .web-actions .bar { width: 1px; height: 12px; margin: 0 13px 0 14px; background: #666; }
  .avatar {
    width: 15px; height: 15px; margin: 0 15px; border-radius: 50%; background: #512da8; color: #fff;
    font-size: 6px; line-height: 15px; text-align: center;
  }
  .bookmarks { display: flex; gap: 13px; height: 22px; padding-left: 10px; font-size: 9px; }
  .bookmarks a { display: flex; align-items: center; gap: 5px; }

  .page { flex: 1; display: flex; min-height: 0; background: #000; }
  .page-main { flex: 1; min-width: 0; display: flex; flex-direction: column; }
  .panel-end { height: 26px; margin: 0 25px 30px 24px; padding: 0 140px 0 141px; background: #626262; border: 1px solid #858585; border-top: 0; }
  .panel-bar { height: 4px; background: #cfcdcf; border-radius: 0 0 4px 4px; box-shadow: 0 1px 1px #444; }
  .chart { display: grid; background: linear-gradient(135deg, #6d15ee, #ed5f59); }
  .axes, .speed, .stats { grid-area: 1 / 1; }
  .axes { display: flex; flex-direction: column; height: 334px; color: rgba(255, 255, 255, .55); font: bold 21px/26px "Liberation Sans", "Noto Sans CJK TC", sans-serif; }
  .ax-top { height: 36px; padding-left: 11px; border-bottom: 2px solid rgba(255, 255, 255, .13); }
  .ax-mid { flex: 1; padding: 2px 5px; border-bottom: 2px solid rgba(255, 255, 255, .13); }
  .ax-bottom { display: flex; justify-content: space-between; height: 28px; padding: 0 13px 0 5px; line-height: 28px; }
  .ax-bottom span { white-space: nowrap; }
  .ax-bottom .unit { font-weight: 400; }
  .progress { height: 4px; margin: 0 12px 0 0; background: rgba(255, 255, 255, .45); }
  .speed { width: 100%; height: 334px; }
  .stats { display: flex; justify-content: center; padding-top: 72px; color: #fff; }
  .stat { width: 105px; display: flex; flex-direction: column; align-items: center; }
  .stat b { font: 100 72px/72px Roboto, sans-serif; }
  .stat span { margin-top: 4px; font-size: 15px; line-height: 20px; white-space: nowrap; }

  .typing {
    flex: 1; display: grid; grid-template-columns: 1fr 1px 1fr; align-items: center; padding-bottom: 16px; overflow: hidden;
    font: 34px/46px "Liberation Mono", monospace;
    -webkit-mask-image: linear-gradient(90deg, transparent, #000 5%, #000 91%, transparent);
    mask-image: linear-gradient(90deg, transparent, #000 5%, #000 91%, transparent);
  }
  .typed, .upcoming { min-width: 0; display: flex; gap: 13px; overflow: hidden; }
  .typed { justify-content: flex-end; padding-right: 12px; color: #5669ad; }
  .upcoming { color: #868686; }
  .caret { height: 46px; background: #e3e8ff; }

  .scroll { width: 13px; display: flex; flex-direction: column; align-items: center; padding: 3px 0; background: #f1f1f1; }
  .track { flex: 1; width: 100%; padding: 0 1px; display: flex; flex-direction: column; justify-content: center; }
  .thumb { height: 51%; margin-top: 45px; background: #c1c1c1; }

  .v-foot { display: flex; align-items: center; height: 50px; padding: 0 5px; background: #282828; }
  .fb { width: 40px; height: 40px; display: grid; place-items: center; }
  .film { margin-right: 8px; }
  .heart { margin: 0 12px 0 7px; color: #858585; }
  .vsep.short { height: 18px; margin: 0 16px 0 9px; background: #6a6a6a; }
  .meta { display: flex; align-items: center; gap: 15px; color: #7e7e7e; font-size: 16px; white-space: nowrap; }
  .zoom { display: flex; align-items: center; margin-left: auto; }
  .zoom .vsep { margin: 0 7px 0 8px; }
  .percent { display: grid; width: 97px; height: 40px; margin: 0 7px 0 8px; background: #323232; border: 1px solid #363636; border-radius: 5px; }
  .percent select { grid-area: 1 / 1; padding-left: 14px; appearance: none; font-size: 16px; color: #fff; }
  .percent option { color: #000; }
  .percent .drop { grid-area: 1 / 1; align-self: center; justify-self: end; width: 14px; height: 14px; margin-right: 18px; pointer-events: none; }
  .slider { width: 163px; height: 26px; margin: 0 7px 0 8px; appearance: none; }
  .slider::-webkit-slider-runnable-track { height: 5px; background: #9c9c9c; border-radius: 3px; }
  .slider::-webkit-slider-thumb {
    appearance: none; width: 26px; height: 26px; margin-top: -10px; border: 6px solid #454545; border-radius: 50%; background: #b0b0b0;
  }
</style>
